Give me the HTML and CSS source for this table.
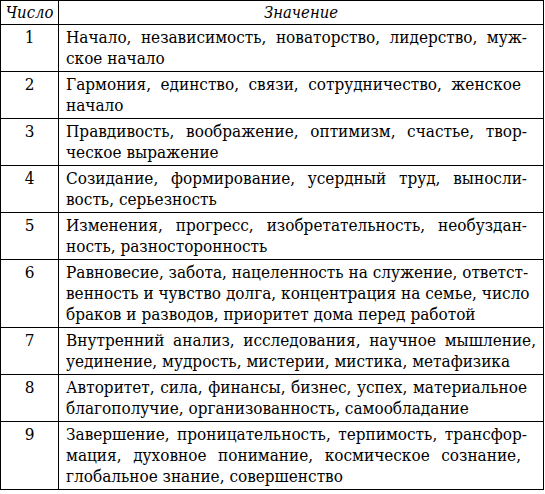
FILE: index.html
```html
<!DOCTYPE html>
<html lang="ru">
<head>
<meta charset="utf-8">
<link rel="stylesheet" href="styles.css">
</head>
<body>
<table class="tbl">
  <colgroup><col class="c-num"><col class="c-val"></colgroup>
  <thead>
    <tr><th>Число</th><th>Значение</th></tr>
  </thead>
  <tbody>
    <tr><td class="num">1</td><td class="val"><div class="ln j">Начало, независимость, новаторство, лидерство, муж-</div><div class="ln">ское начало</div></td></tr>
    <tr><td class="num">2</td><td class="val"><div class="ln j short">Гармония, единство, связи, сотрудничество, женское</div><div class="ln">начало</div></td></tr>
    <tr><td class="num">3</td><td class="val"><div class="ln j">Правдивость, воображение, оптимизм, счастье, твор-</div><div class="ln">ческое выражение</div></td></tr>
    <tr><td class="num">4</td><td class="val"><div class="ln j">Созидание, формирование, усердный труд, выносли-</div><div class="ln">вость, серьезность</div></td></tr>
    <tr><td class="num">5</td><td class="val"><div class="ln j">Изменения, прогресс, изобретательность, необуздан-</div><div class="ln">ность, разносторонность</div></td></tr>
    <tr><td class="num">6</td><td class="val"><div class="ln j">Равновесие, забота, нацеленность на служение, ответст-</div><div class="ln j">венность и чувство долга, концентрация на семье, число</div><div class="ln">браков и разводов, приоритет дома перед работой</div></td></tr>
    <tr><td class="num">7</td><td class="val"><div class="ln j long">Внутренний анализ, исследования, научное мышление,</div><div class="ln">уединение, мудрость, мистерии, мистика, метафизика</div></td></tr>
    <tr><td class="num">8</td><td class="val"><div class="ln j">Авторитет, сила, финансы, бизнес, успех, материальное</div><div class="ln">благополучие, организованность, самообладание</div></td></tr>
    <tr><td class="num">9</td><td class="val"><div class="ln j">Завершение, проницательность, терпимость, трансфор-</div><div class="ln j short">мация, духовное понимание, космическое сознание,</div><div class="ln">глобальное знание, совершенство</div></td></tr>
  </tbody>
</table>
</body>
</html>
```
FILE: styles.css
```css
html, body {
  margin: 0;
  padding: 0;
  background: #fff;
}
body {
  font-family: "DejaVu Serif Condensed", "DejaVu Serif", "Noto Serif CJK SC", serif;
  color: #000;
}
.tbl {
  border-collapse: collapse;
  table-layout: fixed;
  width: 544px;
}
.c-num { width: 58px; }
.tbl th, .tbl td {
  border: 1px solid #000;
  vertical-align: top;
}
.tbl th {
  font-weight: normal;
  font-style: italic;
  font-size: 16.5px;
  line-height: 21px;
  padding: 1px 0 1px 0;
  text-align: center;
}
.tbl td {
  font-size: 17px;
  line-height: 21px;
  padding: 2px 7px 2px 7px;
}
.num {
  text-align: center;
}
.tbl .val {
  padding-right: 7px;
}
.ln {
  white-space: nowrap;
  text-align: left;
  margin-right: 9px;
}
.ln.j {
  text-align: justify;
  text-align-last: justify;
}
.ln.long {
  margin-right: 0;
}
.ln.short {
  margin-right: 15px;
}
```
